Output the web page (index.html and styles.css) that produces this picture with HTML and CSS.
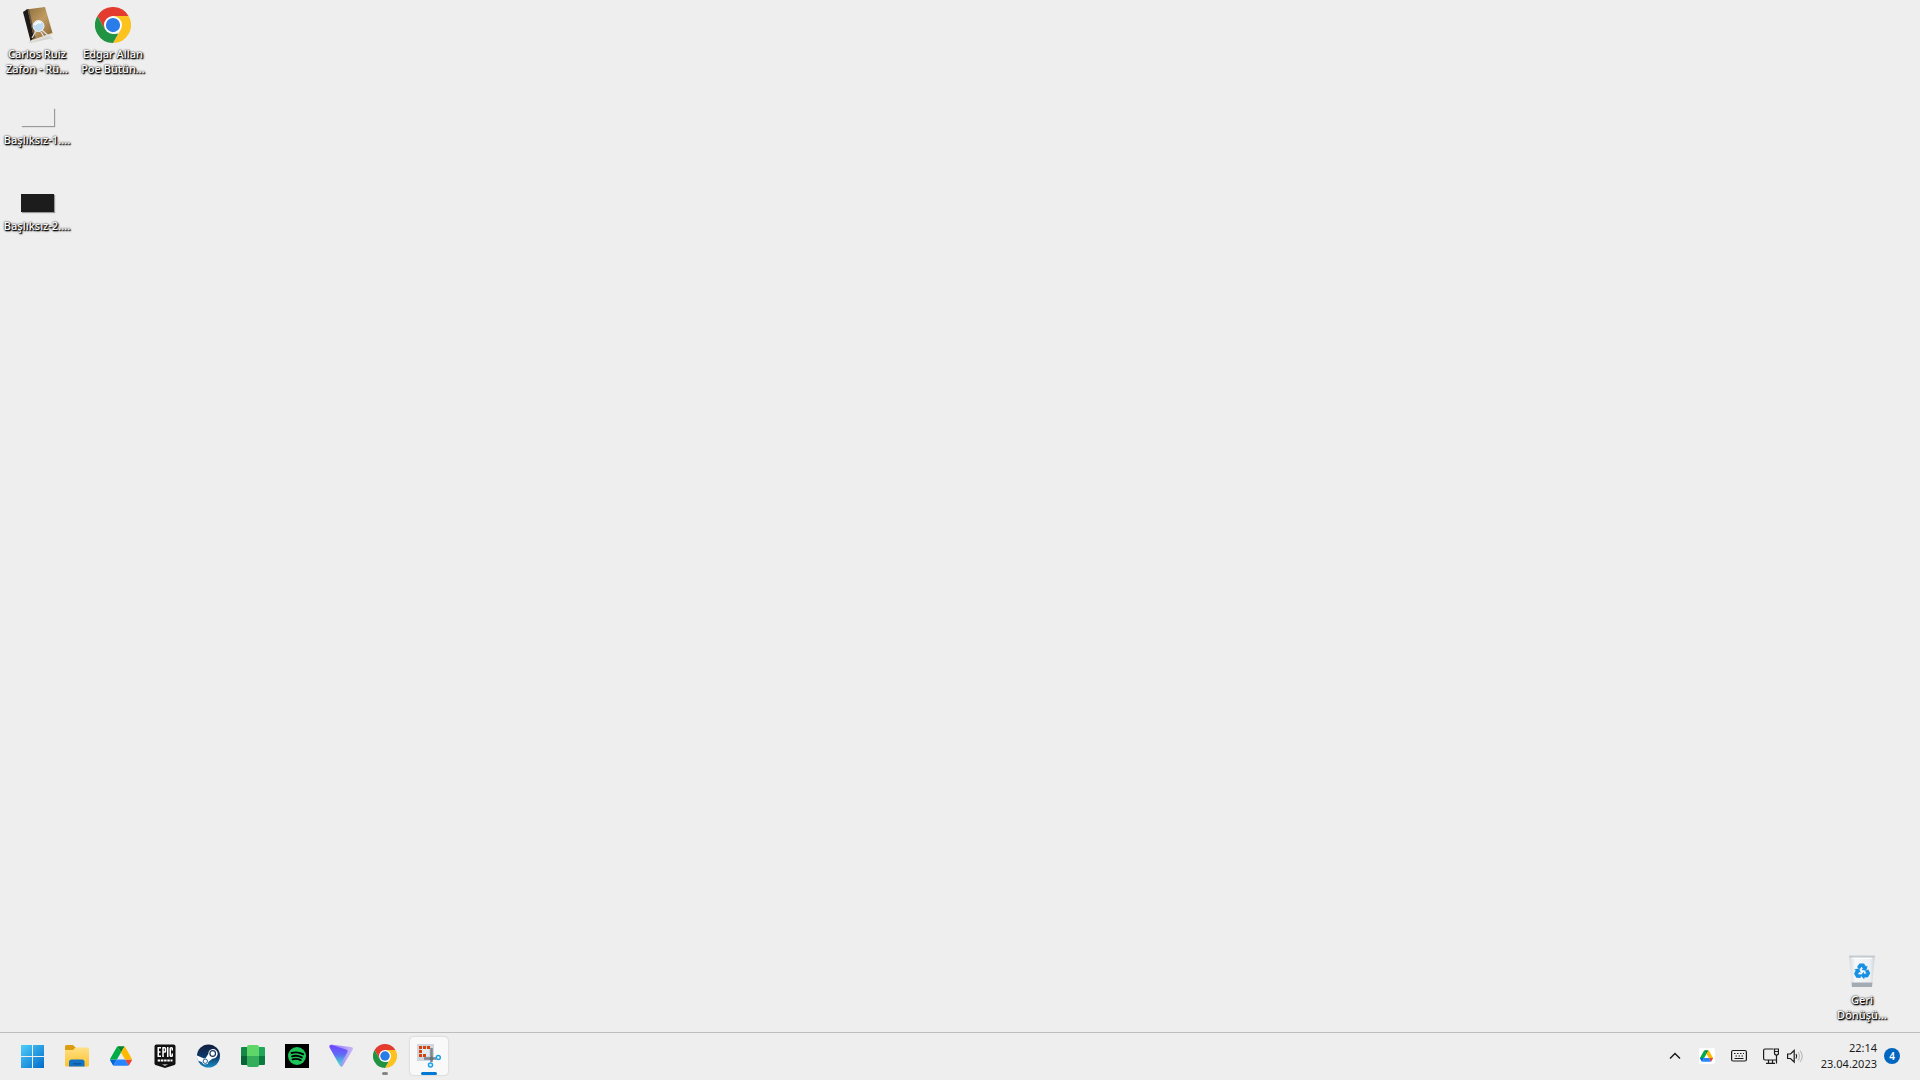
FILE: index.html
```html
<!DOCTYPE html>
<html lang="tr">
<head>
<meta charset="utf-8">
<meta name="viewport" content="width=device-width, initial-scale=1">
<title>Masaüstü</title>
<link rel="stylesheet" href="styles.css">
</head>
<body>
<svg class="defs" width="0" height="0" aria-hidden="true">
  <defs>
    <linearGradient id="win" x1="0" y1="0" x2="24" y2="24" gradientUnits="userSpaceOnUse"><stop offset="0" stop-color="#4fd0fb"/><stop offset="1" stop-color="#0069c9"/></linearGradient>
    <linearGradient id="folder" x1="0" y1="0" x2="0" y2="1"><stop offset="0" stop-color="#ffe083"/><stop offset="1" stop-color="#fcc22f"/></linearGradient>
    <linearGradient id="leather" x1="0" y1="0" x2="1" y2="1"><stop offset="0" stop-color="#8a6a38"/><stop offset=".5" stop-color="#c19c62"/><stop offset="1" stop-color="#84602f"/></linearGradient>
    <linearGradient id="steam" x1="0" y1="0" x2="0" y2="1"><stop offset="0" stop-color="#111d3c"/><stop offset=".55" stop-color="#0d3b6b"/><stop offset="1" stop-color="#1a8cc4"/></linearGradient>
    <linearGradient id="vpn" x1="0" y1="3" x2="0" y2="22" gradientUnits="userSpaceOnUse"><stop offset="0" stop-color="#6d4aff"/><stop offset=".4" stop-color="#5f6cf5"/><stop offset="1" stop-color="#3ff0c8"/></linearGradient>
    <linearGradient id="vpn2" x1="0" y1="0" x2="1" y2="0"><stop offset="0" stop-color="#8c74ff"/><stop offset="1" stop-color="#c9b6f5"/></linearGradient>
    <linearGradient id="bin" x1="0" y1="0" x2="1" y2="0"><stop offset="0" stop-color="#d5dade"/><stop offset=".25" stop-color="#f5f7f9"/><stop offset=".8" stop-color="#eceff2"/><stop offset="1" stop-color="#cfd4d8"/></linearGradient>
    <symbol id="chrome" viewBox="0 0 48 48">
      <path fill="#e33b2e" d="M3.200 12A24 24 0 0 1 44.800 12H24L13.600 30z"/>
      <path fill="#fcc31e" d="M44.800 12A24 24 0 0 1 24 48L34.400 30 24 12z"/>
      <path fill="#229342" d="M24 48A24 24 0 0 1 3.200 12L13.600 30 24 36 31 35.700z"/>
      <circle cx="24" cy="24" r="12" fill="#fff"/><circle cx="24" cy="24" r="9.500" fill="#2a7de9"/>
    </symbol>
    <symbol id="drive" viewBox="0 0 87.300 78">
      <path fill="#0066da" d="m6.600 66.850 3.850 6.650c.8 1.400 1.950 2.500 3.300 3.300l13.750-23.800H0c0 1.550.4 3.100 1.200 4.500z"/>
      <path fill="#00ac47" d="M43.650 25 29.900 1.200c-1.350.8-2.500 1.900-3.300 3.300L1.200 48.500A9 9 0 0 0 0 53h27.500z"/>
      <path fill="#ea4335" d="M73.550 76.800c1.350-.8 2.500-1.900 3.300-3.300l1.600-2.750 7.650-13.250c.8-1.400 1.200-2.950 1.200-4.500H59.800l5.850 11.500z"/>
      <path fill="#00832d" d="M43.650 25 57.400 1.200C56.050.4 54.500 0 52.900 0H34.400c-1.600 0-3.150.45-4.500 1.200z"/>
      <path fill="#2684fc" d="M59.800 53H27.500L13.750 76.800c1.350.8 2.900 1.200 4.500 1.200h50.800c1.600 0 3.150-.45 4.500-1.200z"/>
      <path fill="#ffba00" d="M73.400 26.500 60.700 4.500c-.8-1.400-1.950-2.500-3.300-3.300L43.650 25 59.800 53h27.450c0-1.550-.4-3.100-1.200-4.500z"/>
    </symbol>
  </defs>
</svg>

<main class="desktop">
  <div class="grid">
    <a class="item" href="#">
      <svg class="pic" viewBox="0 0 36 36" aria-hidden="true">
        <path d="M9 35 31 29l3 2-22 5z" fill="#bbb" opacity=".5"/>
        <path d="M7 2.500 26 0l7.500 26-20 7z" fill="url(#leather)"/>
        <path d="M4 5 8.500 2l6.500 29-3.500 3z" fill="#1d1a17"/>
        <path d="m8.500 2 1.500 0 6.500 29-1.500.5z" fill="#5f5140"/>
        <path d="m12 34 21.500-8 .5 1.500L13 35z" fill="#e6dfd2"/>
        <path d="m23 23 11 10M17 24l-4 7M22 25l3 5" stroke="#dddfe0" stroke-width="1.300"/>
        <circle cx="19.500" cy="19" r="5.500" fill="#bfdcf3" stroke="#eef2f5"/>
        <path d="M16 18a4 4 0 0 1 6-2" stroke="#fff" stroke-width="2" fill="none"/>
      </svg>
      <span class="label">Carlos Ruiz Zafon - Rü...</span>
    </a>
    <a class="item" href="#">
      <svg class="pic" aria-hidden="true"><use href="#chrome"/></svg>
      <span class="label">Edgar Allan Poe Bütün...</span>
    </a>
    <a class="item first" href="#">
      <span class="pic file"><span class="thumb light"></span></span>
      <span class="label">Başlıksız-1....</span>
    </a>
    <a class="item first" href="#">
      <span class="pic file"><span class="thumb dark"></span></span>
      <span class="label">Başlıksız-2....</span>
    </a>
  </div>
  <a class="item recycle" href="#">
    <svg class="pic" viewBox="0 0 36 36" aria-hidden="true">
      <path d="M5 3h26l-3 31H8z" fill="url(#bin)"/>
      <path d="M5 2.500h26v2H5z" fill="#c6cbd0"/><path d="M8 5h20v1H8z" fill="#fff"/>
      <path d="M7.600 29.500h20.800L28 34H8z" fill="#a3abb3"/>
      <g fill="#1590e4">
        <path id="arrow" d="m13 14 2.500-3.500h4.500l2 3 1.600-.8-1.300 5-5-1 1.600-1-1.400-2-1.700 2.600z"/>
        <use href="#arrow" transform="rotate(120 18 18.500)"/>
        <use href="#arrow" transform="rotate(240 18 18.500)"/>
      </g>
    </svg>
    <span class="label">Geri<br>Dönüşü...</span>
  </a>
</main>

<footer class="taskbar">
  <nav class="apps" aria-label="Görev çubuğu">
    <button class="app" aria-label="Başlat"><svg viewBox="0 0 24 24"><path fill="url(#win)" d="M0 1h11v11H0zM12 1h11v11H12zM0 13h11v11H0zM12 13h11v11H12z"/></svg></button>
    <button class="app" aria-label="Dosya Gezgini"><svg viewBox="0 0 24 24"><path fill="#dc9c10" d="M0 2.500Q0 1 1.500 1H8l2.500 2.500V8H0z"/><path fill="url(#folder)" d="M0 6h8l2.500-2.500h12Q24 3.500 24 5v16q0 1.500-1.500 1.500h-21Q0 22.500 0 21z"/><path fill="#1273c5" d="M4 22.500V18q0-2.500 2.500-2.500h10.500q2.500 0 2.500 2.500v4.500z"/><path fill="#0b57a0" d="M8 19h8v1.500H8z"/></svg></button>
    <button class="app" aria-label="Google Drive"><svg class="small"><use href="#drive"/></svg></button>
    <button class="app" aria-label="Epic Games"><svg viewBox="0 0 24 24"><path fill="#111" d="M3.500.5h17Q22.500.5 22.500 2.500v17.500l-1 1L12 24l-9.500-3-1-1V2.500q0-2 2-2z"/><g fill="none" stroke="#fff" stroke-width="1.500"><path d="M8 3.750H5.250v8.500H8M5 8h2.500M10 13V3.750h1.700q.8 0 .8.800v2.700q0 .8-.8.800H10M14.750 3v10M19.250 6.500V4.500q0-.75-.75-.75h-.5q-.75 0-.75.750v7q0 .75.75.75h.5q.75 0 .75-.75v-2"/><path stroke-width="2" stroke-dasharray="2.500 .7" d="M4.700 16.500h14.800"/></g><path fill="#fff" d="m9 20.500 3 1.200 3-1.200z"/></svg></button>
    <button class="app" aria-label="Steam"><svg viewBox="1 0 24 24"><circle cx="12.500" cy="12" r="11.500" fill="url(#steam)"/><path fill="#fff" d="m1 11.500 7 3a3.500 3.500 0 0 1 1.700-.4L12.300 10a4.700 4.700 0 1 1 4.400 4.400l-4 3a3.500 3.500 0 0 1-6.700.8L1.800 16.400A12 12 0 0 1 1 11.500z"/><circle cx="16.700" cy="9.500" r="2.800" fill="#fff" stroke="#16345c" stroke-width="1.200"/><circle cx="9.300" cy="17.200" r="2.200" fill="none" stroke="#1a5b91"/></svg></button>
    <button class="app" aria-label="Emülatör"><svg viewBox="0 0 24 24"><path fill="#158848" d="M0 4q0-1 1-1h6v9H0z"/><path fill="#0a6237" d="M0 12h7v9H1q-1 0-1-1z"/><path fill="#22a65a" d="M17 3h6q1 0 1 1v8h-7z"/><path fill="#0a7a3e" d="M17 12h7v8q0 1-1 1h-6z"/><path fill="#5ed768" d="M6 3q0-2 2-2h8q2 0 2 2v9H6z"/><path fill="#35ae5a" d="M6 12h12v9q0 2-2 2H8q-2 0-2-2z"/></svg></button>
    <button class="app" aria-label="Spotify"><svg viewBox="0 0 24 24"><path d="M0 0h24v24H0z"/><circle cx="12" cy="12" r="9" fill="#1fc558"/><path fill="none" stroke="#000" stroke-linecap="round" stroke-width="1.900" d="M6.500 9q6-1.700 11.500 1.200M7 12.300q5-1.500 9.800 1M7.500 15.300q4.300-1.100 8.200.8"/></svg></button>
    <button class="app" aria-label="Proton VPN"><svg viewBox="0 0 24 24"><path fill="url(#vpn2)" d="M1.500.5 22 3q3 .5 1.500 3L14 21.500q-1.500 2.500-3 0z"/><path fill="url(#vpn)" d="M.3 3Q0 .5 2.500 1L17 5.500q2.500.8 1 3.200l-6.500 11.800q-.5 1 1 2-1.200.2-2-1.200z"/></svg></button>
    <button class="app running" aria-label="Google Chrome"><svg><use href="#chrome"/></svg></button>
    <button class="app running active" aria-label="Ekran Alıntısı Aracı"><svg viewBox="0 0 24 24"><path fill="#cfd6de" d="M0 0h17v13l-4 4H0z"/><path fill="#e4e9ee" d="M4 4h8v8H4z"/><path fill="#d8420b" d="M2 2h3v3H2zM6 2h3v3H6zM10 2h3v3h-3zM2 6h3v3H2zM2 10h3v3H2zM6 10h3v3H6z"/><path fill="none" stroke="#7e8790" stroke-width="2.500" d="M14.500 4v14M7 14.500h12"/><circle cx="14.500" cy="14.500" r="2" fill="#6a727a"/><circle cx="21.300" cy="13.500" r="2" fill="#e9f7ff" stroke="#1aa0e6" stroke-width="1.500"/><circle cx="13.500" cy="21" r="2" fill="#e9f7ff" stroke="#1aa0e6" stroke-width="1.500"/></svg></button>
  </nav>
  <div class="tray">
    <button class="tray-btn" aria-label="Gizli simgeler"><svg viewBox="0 0 16 16"><path class="line" d="m3 10.500 5-5 5 5"/></svg></button>
    <button class="tray-btn" aria-label="Google Drive"><span class="tile"><svg><use href="#drive"/></svg></span></button>
    <button class="tray-btn" aria-label="Dokunmatik klavye"><svg viewBox="0 0 16 16"><rect class="thin" x=".6" y="2.500" width="14.800" height="10.500" rx="1.500"/><path class="thin" d="M3.500 10.500h9M3 5.500h1.500m1.500 0h1.500m1.500 0h1.500m1.500 0H13M4.500 8H6m1.500 0H9m1.500 0H12"/></svg></button>
    <button class="tray-btn pair" aria-label="Ağ ve ses">
      <svg viewBox="0 0 16 16"><path class="thin" d="M10.500 1H2Q.6 1 .6 2.500v8q0 1.500 1.400 1.500h11.500M5.500 12v3m4-3v3M3 15.300h9M13.500 7v8.500M11.500 1h4v4q0 2-2 2t-2-2zM11.500 3.500h4"/></svg>
      <svg viewBox="0 0 16 16"><path class="thin" d="M.6 6v4.500h2.900l3.700 3.500V2.500L3.500 6z"/><path class="thin" d="M9 6q1.500 2.200 0 4.500"/><path class="faint" d="M11 4q3 4.200 0 8.500M13 2.500q4.500 5.700 0 11.500"/></svg>
    </button>
    <button class="clock"><time datetime="2023-04-23T22:14">22:14<br>23.04.2023</time><span class="badge">4</span></button>
  </div>
</footer>
</body>
</html>
```
FILE: styles.css
```css
* { box-sizing: border-box; }

body {
  display: flex;
  flex-direction: column;
  min-height: 100vh;
  margin: 0;
  background: #eee;
  color: #1b1b1b;
  font-family: "Noto Sans", "Open Sans", sans-serif;
}

button {
  margin: 0;
  padding: 0;
  border: 0;
  background: none;
  color: inherit;
  font: inherit;
}

svg { display: block; }
.defs { position: absolute; }

/* Desktop */
.desktop {
  display: flex;
  flex: 1;
  justify-content: space-between;
}

.grid {
  display: grid;
  grid-template-columns: 76px 76px;
  grid-auto-rows: 86px;
  align-content: start;
}

.item {
  display: flex;
  flex-direction: column;
  align-items: center;
  gap: 3px;
  width: 74px;
  padding-top: 7px;
  color: #fff;
  text-decoration: none;
}

.first { grid-column: 1; }
.pic { width: 36px; height: 36px; }

.label {
  max-width: 74px;
  font-size: 11px;
  font-weight: 500;
  line-height: 15px;
  text-align: center;
  text-shadow: 1px 1px 1px #000, 1px 1px 2px #000, 0 0 2px #000;
}

.file {
  display: flex;
  align-items: flex-end;
  justify-content: center;
  padding-bottom: 3px;
}

.thumb { width: 33px; height: 18px; }
.light { background: #eee; box-shadow: 1px 1px 1px #999; }
.dark { background: #1c1c1c; box-shadow: 1px 1px 1px #999; }

.recycle {
  align-self: flex-end;
  height: 86px;
  margin-right: 21px;
}

/* Taskbar */
.taskbar {
  display: flex;
  justify-content: space-between;
  height: 48px;
  padding: 4px 20px 5px 14px;
  border-top: 1px solid #bdbdbd;
}

.apps { display: flex; gap: 6px; }

.app {
  display: flex;
  position: relative;
  align-items: center;
  justify-content: center;
  width: 38px;
  height: 38px;
  border-radius: 4px;
}

.app svg { width: 24px; height: 24px; }
.app .small { width: 22px; height: 20px; }
.active { background: #f9f9f9; box-shadow: 0 0 2px #bbb; }

.running::after {
  position: absolute;
  bottom: 0;
  width: 6px;
  height: 3px;
  border-radius: 2px;
  background: #868686;
  content: "";
}

.active::after { width: 16px; background: #0078d4; }

.tray { display: flex; align-items: center; }

.tray-btn {
  display: flex;
  align-items: center;
  justify-content: center;
  width: 32px;
  height: 38px;
}

.tray-btn svg { width: 16px; height: 16px; }
.pair { gap: 8px; width: 56px; }

.tile {
  display: flex;
  align-items: center;
  justify-content: center;
  width: 16px;
  height: 16px;
  border-radius: 2px;
  background: #fff;
}

.tile .drive, .tile svg { width: 13px; height: 12px; }

.line, .thin, .faint { fill: none; stroke: #1b1b1b; stroke-width: 1.5; }
.thin { stroke-width: 1.2; }
.faint { stroke: #bbb; stroke-width: 1.2; }

.clock {
  display: flex;
  align-items: center;
  gap: 7px;
  margin-left: 10px;
  font-size: 11px;
  line-height: 16px;
  text-align: right;
}

.badge {
  width: 16px;
  height: 16px;
  border-radius: 50%;
  background: #0067c0;
  color: #fff;
  font-size: 10px;
  font-weight: 600;
  text-align: center;
}
```
